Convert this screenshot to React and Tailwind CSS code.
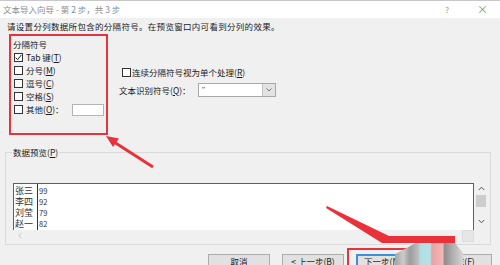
import React from "react";

function Box({ checked }) {
  return (
    <span className="w-[9px] h-[9px] border border-[#333333] bg-white flex items-center justify-center shrink-0">
      {checked && (
        <svg width="7" height="7" viewBox="0 0 7 7">
          <path d="M0.6 3.6 L2.6 5.7 L6.4 0.9" stroke="#222" strokeWidth="1" fill="none" />
        </svg>
      )}
    </span>
  );
}

function K({ c }) {
  return (
    <>
      (<span className="underline">{c}</span>)
    </>
  );
}

function Row({ checked, children }) {
  return (
    <div className="h-[13px] flex items-center gap-[3px] pl-[1px]">
      <Box checked={checked} />
      <span className="leading-[11px] whitespace-nowrap flex items-center">{children}</span>
    </div>
  );
}

export default function App() {
  const names = ["张三", "李四", "刘莹", "赵一"];
  const nums = ["99", "92", "79", "82"];
  return (
    <div className="w-[500px] h-[265px] relative overflow-hidden bg-[#f0f0f0] font-['Noto_Sans_CJK_SC',sans-serif] text-[#1a1a1a] text-[8.5px]">
      {/* Title bar */}
      <div className="h-[18px] bg-white border-t border-[#c8c8c8] flex items-center pl-[3px] pr-[12px] text-[#8c8c8c]">
        <span className="leading-[11px]">文本导入向导 - 第 2 步，共 3 步</span>
        <span className="ml-auto text-[8px]">?</span>
        <span className="ml-[28px] text-[11px] leading-[11px]">×</span>
      </div>

      <div className="px-[5px]">
        <div className="mt-[3px] ml-[2px] h-[10px] leading-[10px] whitespace-nowrap tracking-[0.3px]">
          请设置分列数据所包含的分隔符号。在预览窗口内可看到分列的效果。
        </div>

        <div className="flex mt-[3px]">
          {/* delimiter group */}
          <div className="ml-[4px] w-[99px] h-[101px] border-2 border-[#e5343d] pl-[2px] pt-[3px]">
            <div className="h-[11px] leading-[11px]">分隔符号</div>
            <div className="mt-[1px] flex flex-col">
              <Row checked>
                Tab 键<K c="T" />
              </Row>
              <Row>
                分号<K c="M" />
              </Row>
              <Row>
                逗号<K c="C" />
              </Row>
              <Row>
                空格<K c="S" />
              </Row>
              <div className="h-[13px] flex items-center gap-[3px] pl-[1px]">
                <Box />
                <span className="leading-[11px] whitespace-nowrap">
                  其他<K c="O" />：
                </span>
                <span className="ml-auto mr-[2px] w-[32px] h-[12px] bg-white border border-[#b4b4b4]" />
              </div>
            </div>
          </div>

          {/* right options */}
          <div className="ml-[11px] pt-[32px]">
            <div className="h-[13px] flex items-center gap-[1px]">
              <span className="ml-[3px]">
                <Box />
              </span>
              <span className="leading-[11px] whitespace-nowrap">
                连续分隔符号视为单个处理<K c="R" />
              </span>
            </div>
            <div className="mt-[4px] h-[14px] flex items-center">
              <span className="w-[79px] leading-[11px] whitespace-nowrap">
                文本识别符号<K c="Q" />：
              </span>
              <div className="w-[78px] h-[14px] bg-white border border-[#a8a8a8] flex">
                <span className="flex-1 pl-[3px] leading-[12px] text-[8px] text-[#333333] font-['Liberation_Sans',sans-serif]">&quot;</span>
                <span className="w-[13px] h-full bg-[#e3e3e3] border-l border-[#c4c4c4] flex items-center justify-center">
                  <svg width="6" height="4" viewBox="0 0 6 4">
                    <path d="M0.5 0.5 L3 3 L5.5 0.5" stroke="#666" strokeWidth="0.9" fill="none" />
                  </svg>
                </span>
              </div>
            </div>
          </div>
        </div>

        {/* Preview group */}
        <fieldset className="mt-[12px] w-[486px] border border-[#dadada] pb-[3px]">
          <legend className="ml-[6px] px-[1px] leading-[11px]">
            数据预览<K c="P" />
          </legend>
          <div className="mt-[25px] ml-[7px] w-[475px] h-[58px] flex flex-col">
            <div className="flex h-[47px]">
              <div className="w-[461px] bg-white border-t border-r border-l border-[#5f5f5f] flex">
                <div className="w-[24px] border-r border-[#333] flex flex-col pt-[1px] pl-[1px]">
                  {names.map((n) => (
                    <div key={n} className="h-[11px] leading-[11px] text-[9px] text-[#333] whitespace-nowrap">
                      {n}
                    </div>
                  ))}
                </div>
                <div className="flex flex-col pt-[1px] pl-[1px]">
                  {nums.map((n, i) => (
                    <div key={i} className="h-[11px] leading-[11px] text-[7.5px] text-[#333]">
                      {n}
                    </div>
                  ))}
                </div>
              </div>
              <div className="w-[14px] flex flex-col items-center pt-[3px]">
                <svg width="7" height="5" viewBox="0 0 7 5">
                  <path d="M0.8 4 L3.5 1.2 L6.2 4" stroke="#555" strokeWidth="1" fill="none" />
                </svg>
                <div className="mt-[4px] w-[10px] h-[12px] bg-[#cdcdcd]" />
                <svg className="mt-[12px]" width="7" height="5" viewBox="0 0 7 5">
                  <path d="M0.8 1 L3.5 3.8 L6.2 1" stroke="#555" strokeWidth="1" fill="none" />
                </svg>
              </div>
            </div>
            <div className="flex h-[11px]">
              <div className="w-[449px] flex items-center pl-[5px]">
                <svg width="4" height="7" viewBox="0 0 4 7">
                  <path d="M3.5 0.8 L0.8 3.5 L3.5 6.2" stroke="#bdbdbd" strokeWidth="0.9" fill="none" />
                </svg>
              </div>
              <div className="w-[12px] h-[12px] bg-[#e6e6e6] border border-[#dcdcdc]" />
            </div>
          </div>
        </fieldset>

        {/* Buttons */}
        <div className="mt-[9px] flex justify-end gap-[12px] pr-[3px]">
          <div className="w-[62px] h-[20px] bg-[#e1e1e1] border border-[#adadad] text-center leading-[11px] pt-[1px]">取消</div>
          <div className="w-[62px] h-[20px] bg-[#e1e1e1] border border-[#adadad] text-center leading-[11px] pt-[1px]">
            &lt; 上一步<K c="B" />
          </div>
          <div className="w-[62px] h-[20px] bg-[#e1e1e1] border-2 border-[#3d8edb] text-left pl-[6px] leading-[11px]">
            下一步<K c="N" /> &gt;
          </div>
          <div className="w-[62px] h-[20px] bg-[#e1e1e1] border border-[#adadad] text-center leading-[11px] pt-[1px]">
            完成<K c="F" />
          </div>
        </div>
      </div>

      {/* annotations */}
      <div className="absolute left-[347px] top-[248px] w-[112px] h-[22px] border-2 border-[#e5343d]" />
      <div className="absolute left-[395px] top-[241px] w-[68px] h-[24px] bg-[linear-gradient(90deg,#a4a4a4_0%,#cbcbcb_12%,#9c9c9c_22%,#bcbcbc_34%,#aedfe2_37%,#b8e1e4_52%,#e9a1a3_54%,#f2b8b8_70%,#8e8e8e_73%,#b3b3b3_86%,#d6d6d6_100%)] [clip-path:polygon(0_55%,36%_0,86%_0,100%_50%,100%_100%,0_100%)]" />
      <svg className="absolute left-0 top-0 pointer-events-none" width="500" height="265" viewBox="0 0 500 265">
        <line x1="153" y1="167" x2="114" y2="142" stroke="#e8323b" strokeWidth="3" />
        <polygon points="106,136 119,138.5 113,147" fill="#e8323b" />
        <polygon points="327,206 389,236 455,236 455,243 382,243 326,208" fill="#ea3039" />
      </svg>
    </div>
  );
}
